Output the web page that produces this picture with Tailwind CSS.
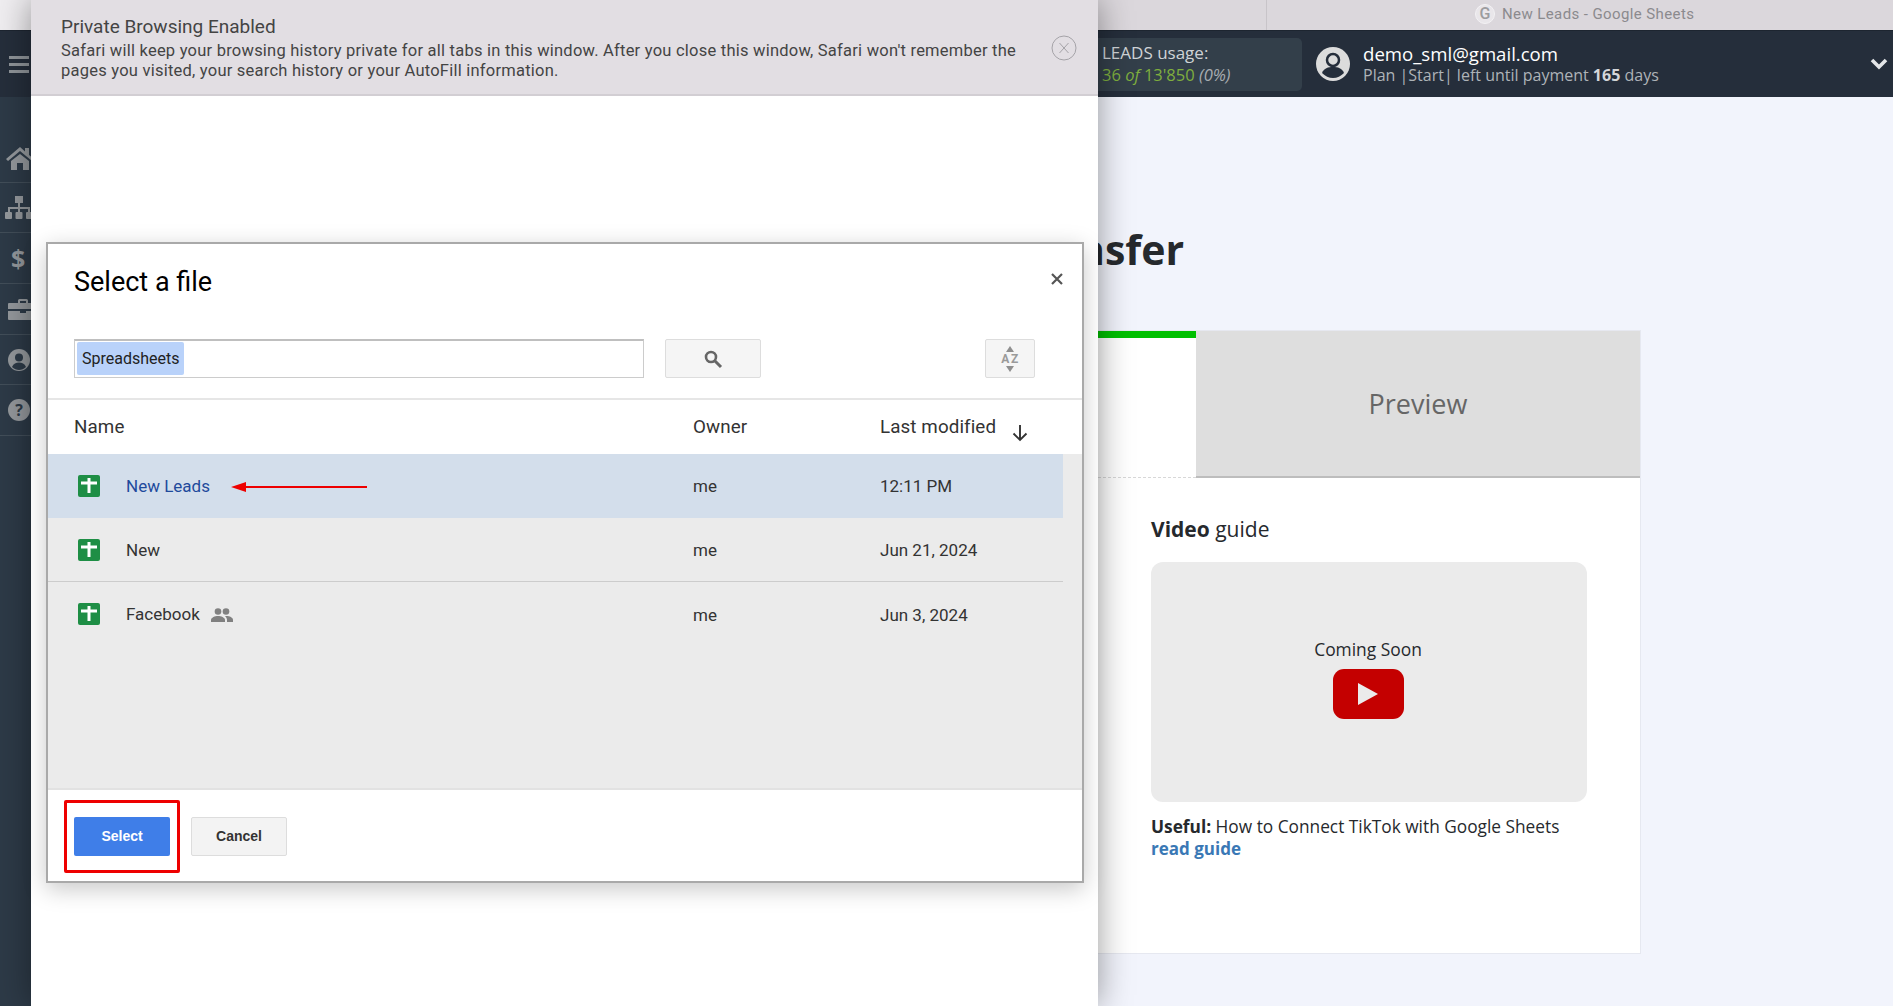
<!DOCTYPE html>
<html lang="en">
<head>
<meta charset="utf-8">
<title>Select a file</title>
<script src="https://cdn.jsdelivr.net/npm/@tailwindcss/browser@4"></script>
</head>
<body class="bg-[#f2f4fc]">
<div class="relative w-[1893px] h-[1006px] overflow-hidden bg-[#f2f4fc] flex flex-col font-['Open_Sans',sans-serif]">

  <!-- Browser tab strip -->
  <div class="h-[30px] shrink-0 flex bg-[#dbd7dc]">
    <div class="w-[1267px] border-r border-[#c8c4c9]"></div>
    <div class="flex-1 flex items-center pl-[208px] pb-[2px] gap-[7px] text-[15px] text-[#8b8a8e] font-['Roboto',sans-serif]">
      <span class="w-[20px] h-[20px] rounded-full bg-[#e9e6ea] border border-[#f3f1f4] flex items-center justify-center text-[16px] font-medium text-[#9c9c9f] leading-none">G</span>
      <span class="tracking-[0.4px]">New Leads - Google Sheets</span>
    </div>
  </div>

  <!-- App header -->
  <div class="h-[67px] shrink-0 flex items-center bg-[#252e3b] border-t border-[#1d2530]">
    <div class="w-[9px] shrink-0"></div>
    <div class="w-[20px] shrink-0 flex flex-col gap-[4px]">
      <div class="h-[3px] bg-[#8f9499]"></div>
      <div class="h-[3px] bg-[#8f9499]"></div>
      <div class="h-[3px] bg-[#8f9499]"></div>
    </div>
    <div class="ml-[1031px] w-[242px] h-[53px] shrink-0 rounded-r-[5px] bg-[#333f4a] pl-[42px] flex flex-col justify-center leading-[22px]">
      <span class="text-[17px] text-[#cfd3d6]">LEADS usage:</span>
      <span class="text-[16.5px] text-[#7fae3e]">36 <i>of</i> 13'850 <i class="text-[#a7acb0]">(0%)</i></span>
    </div>
    <svg class="ml-[14px] shrink-0" width="34" height="34" viewBox="0 0 34 34">
      <circle cx="17" cy="17" r="17" fill="#dcdcdc"/>
      <circle cx="17" cy="13" r="6" fill="#dcdcdc" stroke="#252e3b" stroke-width="2.5"/>
      <path d="M6 26c2-5 6-6 11-6s9 1 11 6c-3 3-7 5-11 5s-8-2-11-5z" fill="#252e3b"/>
    </svg>
    <div class="ml-[13px] flex flex-col">
      <span class="text-[18.6px] leading-[22px] text-white">demo_sml@gmail.com</span>
      <span class="text-[16px] leading-[20px] text-[#aeb3b8]">Plan |Start| left until payment <b class="text-[#d4d6d9]">165</b> days</span>
    </div>
    <svg class="ml-auto mr-[5px] shrink-0" width="18" height="14" viewBox="0 0 18 14">
      <path d="M2 3l7 7 7-7" fill="none" stroke="#e4e6e8" stroke-width="3.6"/>
    </svg>
  </div>

  <!-- Body -->
  <div class="flex-1 flex min-h-0">
    <!-- Sidebar -->
    <div class="w-[60px] shrink-0 bg-[#2d3a47] pt-[36px] flex flex-col">
      <div class="h-[50px] border-b border-white/10 flex items-center pl-[5px]">
        <svg width="30" height="24" viewBox="0 0 30 24"><path d="M15 1L1 13l2 2L15 5l12 10 2-2-5-4V2h-4v3.500zM6 15l9-7 9 7v9h-6v-7h-6v7H6z" fill="#94989c"/></svg>
      </div>
      <div class="h-[50px] border-b border-white/10 flex items-center pl-[4px]">
        <svg width="30" height="26" viewBox="0 0 30 26"><path d="M11 1h8v7h-3v4h10v5h-2v-3H16v3h-2v-3H6v3H4v-5h10V8h-3z" fill="#94989c"/><rect x="1" y="17" width="7" height="7" rx="1" fill="#94989c"/><rect x="11.500" y="17" width="7" height="7" rx="1" fill="#94989c"/><rect x="22" y="17" width="7" height="7" rx="1" fill="#94989c"/></svg>
      </div>
      <div class="h-[51px] border-b border-white/10 flex items-center pl-[11px] text-[25px] font-bold text-[#94989c] leading-none">$</div>
      <div class="h-[51px] border-b border-white/10 flex items-center pl-[8px]">
        <svg width="30" height="22" viewBox="0 0 30 22"><path d="M10 5V2.500A1.500 1.500 0 0 1 11.500 1h7A1.500 1.500 0 0 1 20 2.500V5h-2V3h-6v2z" fill="#94989c"/><path d="M0 6a1 1 0 0 1 1-1h28a1 1 0 0 1 1 1v5H0zM0 13h12v2h6v-2h12v8a1 1 0 0 1-1 1H1a1 1 0 0 1-1-1z" fill="#94989c"/></svg>
      </div>
      <div class="h-[50px] border-b border-white/10 flex items-center pl-[8px]">
        <svg width="22" height="22" viewBox="0 0 22 22"><circle cx="11" cy="11" r="11" fill="#94989c"/><circle cx="11" cy="8.500" r="4" fill="#2d3a47"/><path d="M4 18c1.500-3.500 4-4.500 7-4.500s5.500 1 7 4.500c-2 2-4.500 3-7 3s-5-1-7-3z" fill="#2d3a47"/></svg>
      </div>
      <div class="h-[51px] border-b border-white/10 flex items-center pl-[8px]">
        <svg width="22" height="22" viewBox="0 0 22 22"><circle cx="11" cy="11" r="11" fill="#94989c"/><text x="11" y="17" text-anchor="middle" font-size="16" font-weight="700" fill="#2d3a47" font-family="Open Sans">?</text></svg>
      </div>
    </div>

    <!-- Main page behind the overlay -->
    <div class="flex-1 pl-[1012px] flex flex-col">
      <h1 class="mt-[127px] h-[50px] text-[41px] leading-[50px] font-bold text-[#26292d] whitespace-nowrap pl-[6px]">nsfer</h1>
      <div class="mt-[56px] w-[569px] h-[624px] bg-white border border-[#e6e8f0] flex flex-col">
        <div class="flex h-[147px] shrink-0">
          <div class="w-[123px] flex flex-col border-b border-dashed border-[#d8d8d8]">
            <div class="h-[7px] bg-[#00c000]"></div>
          </div>
          <div class="flex-1 bg-[#dedede] border-b-2 border-[#bdbdbd] flex items-center justify-center pt-[1px] text-[27px] text-[#666666]">Preview</div>
        </div>
        <div class="pl-[78px] pt-[37px] text-[#26292d]">
          <div class="text-[21px] leading-[28px]"><b>Video</b> guide</div>
          <div class="mt-[19px] w-[436px] h-[240px] rounded-[12px] bg-[#ebebeb] flex flex-col items-center pt-[75px] pr-[2px]">
            <span class="text-[17.4px] leading-[24px]">Coming Soon</span>
            <div class="mt-[8px] w-[71px] h-[50px] rounded-[11px] bg-[#c40000] flex items-center justify-center">
              <svg width="20" height="22" viewBox="0 0 20 22"><path d="M0 0l20 11L0 22z" fill="#ebebeb"/></svg>
            </div>
          </div>
          <div class="mt-[14px] text-[17.3px] leading-[22px]"><b>Useful:</b> How to Connect TikTok with Google Sheets</div>
          <div class="text-[17px] leading-[21px] font-bold text-[#3a78b5]">read guide</div>
        </div>
      </div>
    </div>
  </div>

  <!-- Left corner of the window above the sidebar -->
  <div class="absolute left-0 top-0 w-[31px] h-[30px] bg-[#efedf0]"></div>

  <!-- Overlay browser window -->
  <div class="absolute left-[31px] top-0 w-[1067px] h-[1006px] bg-white shadow-[0_0_32px_rgba(0,0,0,0.4)] flex flex-col font-['Roboto',sans-serif]">
    <div class="h-[96px] shrink-0 bg-[#e2dee3] border-b-2 border-[#d2ced3] pl-[30px] pt-[16px] relative text-[#444444]">
      <div class="text-[19px] leading-[22px]">Private Browsing Enabled</div>
      <div class="text-[16.5px] leading-[20px] mt-[3px] w-[985px] tracking-[0.23px]">Safari will keep your browsing history private for all tabs in this window. After you close this window, Safari won't remember the pages you visited, your search history or your AutoFill information.</div>
      <svg class="absolute left-[1020px] top-[35px]" width="26" height="26" viewBox="0 0 26 26"><circle cx="13" cy="13" r="12" fill="none" stroke="#a5a3a8" stroke-width="1"/><path d="M8.500 8l9 10M17.500 8l-9 10" stroke="#a5a3a8" stroke-width="1" fill="none"/></svg>
    </div>

    <!-- Picker dialog -->
    <div class="mt-[146px] ml-[15px] w-[1038px] h-[641px] bg-white border-2 border-[#a9a9a9] shadow-[0_6px_22px_rgba(0,0,0,0.22)] flex flex-col text-[#333333]">
      <div class="h-[95px] shrink-0 pl-[26px] pr-[19px] pt-[21px] flex justify-between items-start">
        <span class="text-[27px] leading-[34px] text-black">Select a file</span>
        <svg class="mt-[8px]" width="12" height="12" viewBox="0 0 12 12"><path d="M1 1l10 10M11 1L1 11" stroke="#555555" stroke-width="2.200"/></svg>
      </div>
      <div class="h-[61px] shrink-0 pl-[26px] flex border-b-2 border-[#e6e6e6]">
        <div class="w-[570px] h-[39px] bg-white border border-[#cccccc] border-t-2 border-t-[#bfbfbf] pl-[2px] pt-[1px]">
          <span class="inline-flex items-center h-[33px] w-[107px] pl-[5px] bg-[#b9d2fa] rounded-[2px] text-[16px] text-[#222222]">Spreadsheets</span>
        </div>
        <div class="ml-[21px] w-[96px] h-[39px] bg-[#f5f5f5] border border-[#dddddd] rounded-[2px] flex items-center justify-center">
          <svg width="20" height="20" viewBox="0 0 20 20"><circle cx="8" cy="8" r="5" fill="none" stroke="#666666" stroke-width="2.600"/><path d="M12 12l6 6" stroke="#666666" stroke-width="3"/></svg>
        </div>
        <div class="ml-[224px] w-[50px] h-[39px] bg-[#f5f5f5] border border-[#dddddd] rounded-[2px] flex flex-col items-center justify-center gap-[1px]">
          <svg width="10" height="6" viewBox="0 0 10 6"><path d="M5 0l4 6H1z" fill="#8f8f8f"/></svg>
          <span class="text-[12px] leading-[12px] font-bold text-[#9a9a9a] tracking-[1.5px] pl-[1px]">AZ</span>
          <svg width="10" height="6" viewBox="0 0 10 6"><path d="M1 0h8L5 6z" fill="#8f8f8f"/></svg>
        </div>
      </div>
      <div class="h-[54px] shrink-0 flex items-center pl-[26px] text-[18.8px] tracking-[0.1px]">
        <span class="w-[619px]">Name</span>
        <span class="w-[187px]">Owner</span>
        <span>Last modified</span>
        <svg class="ml-[15px] mt-[11px]" width="18" height="18" viewBox="0 0 18 18"><path d="M9 1v15M2.500 9.500L9 16l6.500-6.500" fill="none" stroke="#333333" stroke-width="1.900"/></svg>
      </div>
      <div class="flex-1 min-h-0 bg-[#ebebeb] border-b-2 border-[#e2e2e2] text-[17px]">
        <div class="h-[64px] w-[1015px] flex items-center bg-[#d3deeb]">
          <svg class="ml-[30px] shrink-0" width="22" height="22" viewBox="0 0 22 22"><rect width="22" height="22" rx="2" fill="#1e8e45"/><path d="M3 6.500h16v3H12.500V18h-3V9.500H3z" fill="#fff"/><rect x="9.500" y="3" width="3" height="4" fill="#fff"/></svg>
          <span class="ml-[26px] w-[567px] shrink-0 flex items-center text-[#1f4a9c] pt-[2px]">New Leads
            <svg class="ml-[21px]" width="136" height="10" viewBox="0 0 136 10"><path d="M0 5l15-5v4h121v2H15v4z" fill="#ee0000"/></svg>
          </span>
          <span class="w-[187px] shrink-0 pt-[2px]">me</span>
          <span class="pt-[2px]">12:11 PM</span>
        </div>
        <div class="h-[64px] w-[1015px] flex items-center border-b border-[#cccccc]">
          <svg class="ml-[30px] shrink-0" width="22" height="22" viewBox="0 0 22 22"><rect width="22" height="22" rx="2" fill="#1e8e45"/><path d="M3 6.500h16v3H12.500V18h-3V9.500H3z" fill="#fff"/><rect x="9.500" y="3" width="3" height="4" fill="#fff"/></svg>
          <span class="ml-[26px] w-[567px] shrink-0 pt-[2px]">New</span>
          <span class="w-[187px] shrink-0 pt-[3px]">me</span>
          <span class="pt-[3px]">Jun 21, 2024</span>
        </div>
        <div class="h-[64px] w-[1015px] flex items-center">
          <svg class="ml-[30px] shrink-0" width="22" height="22" viewBox="0 0 22 22"><rect width="22" height="22" rx="2" fill="#1e8e45"/><path d="M3 6.500h16v3H12.500V18h-3V9.500H3z" fill="#fff"/><rect x="9.500" y="3" width="3" height="4" fill="#fff"/></svg>
          <span class="ml-[26px] w-[567px] shrink-0 flex items-center pt-[2px]">Facebook
            <svg class="ml-[11px]" width="22" height="14" viewBox="0 0 22 14"><circle cx="7" cy="3.500" r="3.300" fill="#808080"/><circle cx="15" cy="3.500" r="3.300" fill="#808080"/><path d="M0 14v-2c0-2.500 4-4 7-4s7 1.500 7 4v2z" fill="#808080"/><path d="M15.500 8c3 0 6.500 1.500 6.500 4v2h-6v-2c0-1.500-.7-3-2-3.800.5-.1 1-.2 1.500-.2z" fill="#808080"/></svg>
          </span>
          <span class="w-[187px] shrink-0 pt-[3px]">me</span>
          <span class="pt-[3px]">Jun 3, 2024</span>
        </div>
      </div>
      <div class="h-[91px] shrink-0 relative flex items-center pl-[26px] pt-[2px] gap-[21px]">
        <button class="w-[96px] h-[39px] rounded-[2px] bg-[#3f7ee8] text-white text-[14px] font-bold font-['Liberation_Sans',sans-serif]">Select</button>
        <button class="w-[96px] h-[39px] rounded-[2px] bg-[#f3f3f3] border border-[#dddddd] text-[#333333] text-[14px] font-bold font-['Liberation_Sans',sans-serif]">Cancel</button>
        <div class="absolute left-[16px] top-[10px] w-[116px] h-[73px] border-[3px] border-[#ee0000] rounded-[2px]"></div>
      </div>
    </div>
  </div>
</div>
</body>
</html>
